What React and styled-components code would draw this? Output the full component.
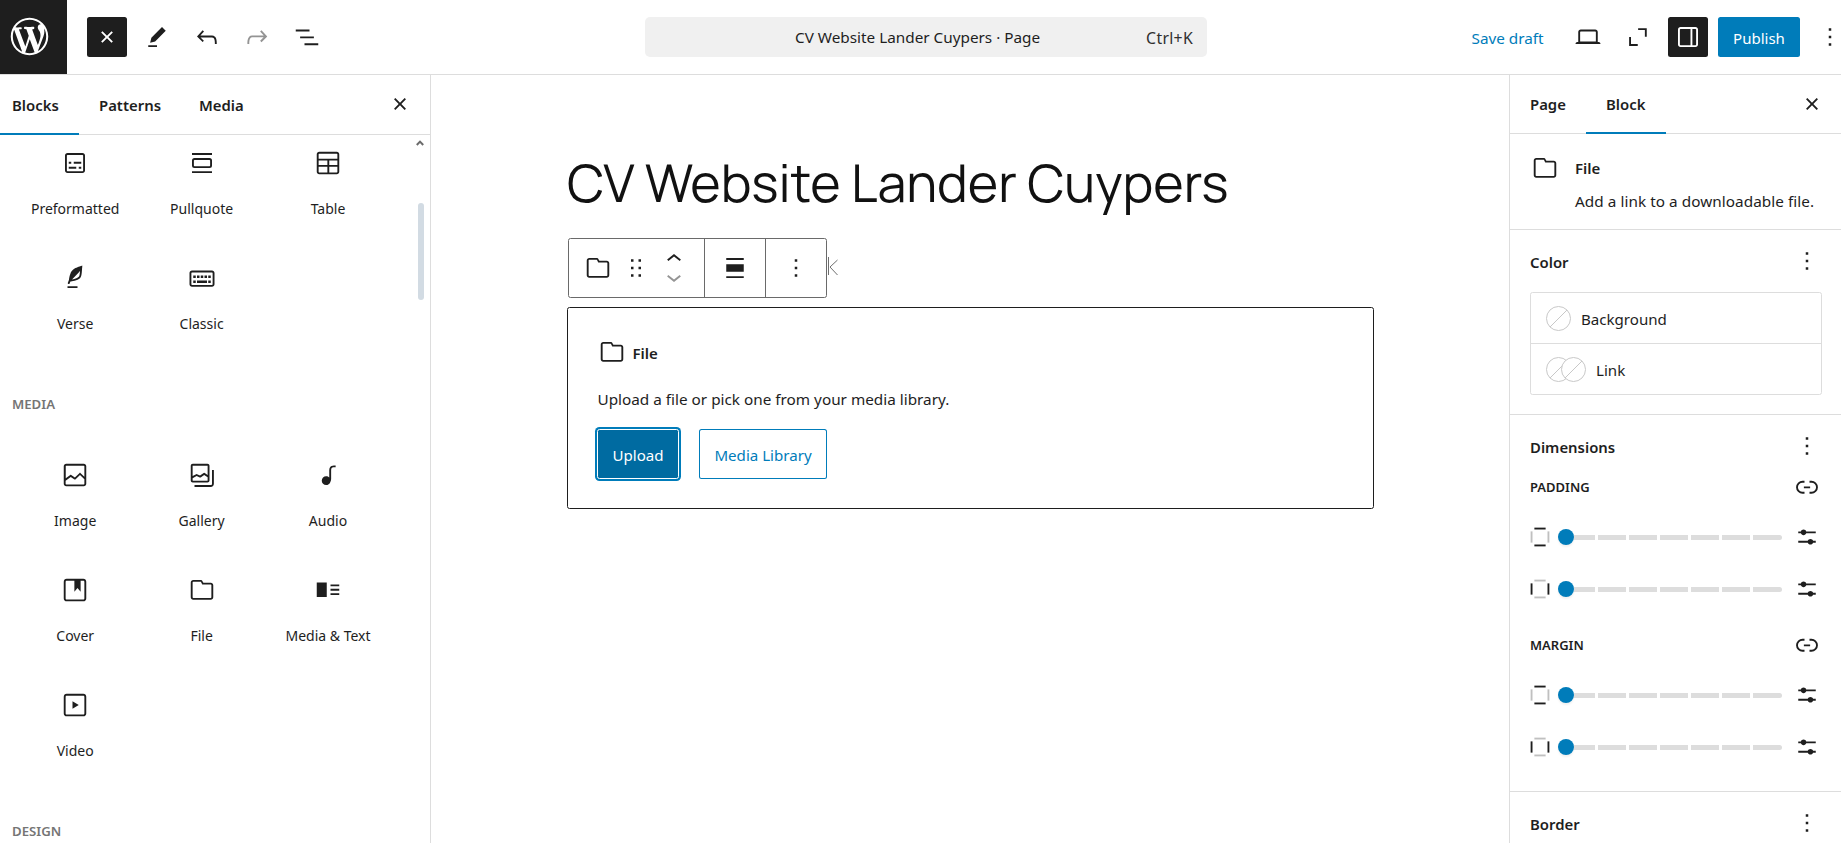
import React from "react";
import styled, { createGlobalStyle, css } from "styled-components";

const ink = "#1e1e1e";
const line = "#dddddd";
const blue = "#007cba";
const uiFont = `"Segoe UI", "Noto Sans", "Open Sans", sans-serif`;

const GlobalStyle = createGlobalStyle`
  *, *::before, *::after { box-sizing: border-box; }
  html, body { margin: 0; padding: 0; overflow: hidden; background: #fff; }
  button { font: inherit; letter-spacing: inherit; color: inherit; background: none; border: 0; padding: 0; margin: 0; }
  h1, h2, h3, p { margin: 0; }
`;

/* ---------- icons ---------- */

const Svg = styled.svg`
  display: block;
  flex: none;
  width: ${(p) => p.$size || 30}px;
  height: ${(p) => p.$size || 30}px;
  fill: currentColor;
`;

const paths = {
  plus: "M11 12.5V17.5H12.5V12.5H17.5V11H12.5V6H11V11H6V12.5H11Z",
  close: "M12 13.06l3.712 3.713 1.061-1.06L13.061 12l3.712-3.712-1.06-1.06L12 10.938 8.288 7.227l-1.061 1.06L10.939 12l-3.712 3.712 1.06 1.061L12 13.061z",
  edit: "m19 7-3-3-8.5 8.5-1 4 4-1L19 7Zm-7 11.5H5V20h7v-1.5Z",
  undo: "M18.3 11.7c-.6-.6-1.4-.9-2.3-.9H6.7l2.9-3.3-1.1-1-4.5 5L8.5 16l1-1-2.7-2.7H16c.5 0 .9.2 1.3.5 1 1 1 3.4 1 4.5v.3h1.5v-.2c0-1.5 0-4.3-1.5-5.7z",
  redo: "M15.6 6.5l-1.1 1 2.9 3.3H8c-.9 0-1.7.3-2.3.9-1.4 1.5-1.4 4.2-1.4 5.6v.2h1.5v-.3c0-1.1 0-3.5 1-4.5.3-.3.7-.5 1.3-.5h9.2L14.5 15l1.1 1.1 4.6-4.6-4.6-5z",
  listView: "M3 6h11v1.5H3V6Zm3.5 5.5h11V13h-11v-1.5ZM21 17H10v1.5h11V17Z",
  laptop: "M20.5 16h-.7V8c0-1.1-.9-2-2-2H6.2c-1.1 0-2 .9-2 2v8h-.7c-.8 0-1.5.7-1.5 1.5h20c0-.8-.7-1.5-1.5-1.5zM5.7 8c0-.3.2-.5.5-.5h11.6c.3 0 .5.2.5.5v7.6H5.7V8z",
  zoomOut: "M12.1 4.9h6.9v6.9h-1.5V6.4h-5.4V4.9ZM4.9 12h1.5v5.6h5.4v1.5H4.9V12Z",
  drawer: "M18 4H6c-1.1 0-2 .9-2 2v12c0 1.1.9 2 2 2h12c1.1 0 2-.9 2-2V6c0-1.1-.9-2-2-2zm-4 14.5H6c-.3 0-.5-.2-.5-.5V6c0-.3.2-.5.5-.5h8v13zm4.5-.5c0 .3-.2.5-.5.5h-2.5v-13H18c.3 0 .5.2.5.5v12z",
  more: "M13 19h-2v-2h2v2zm0-6h-2v-2h2v2zm0-6h-2V5h2v2z",
  file: "M19 6.2h-5.9l-.6-1.1c-.3-.7-1-1.1-1.8-1.1H5c-1.1 0-2 .9-2 2v11.8c0 1.1.9 2 2 2h14c1.1 0 2-.9 2-2V8.2c0-1.1-.9-2-2-2zm.5 11.6c0 .3-.2.5-.5.5H5c-.3 0-.5-.2-.5-.5V5.8c0-.3.2-.5.5-.5h5.8c.2 0 .4.1.4.3l1 2H19c.3 0 .5.2.5.5v9.7z",
  pullquote: "M18 8H6a2 2 0 00-2 2v4a2 2 0 002 2h12a2 2 0 002-2v-4a2 2 0 00-2-2zm.5 6a.5.5 0 01-.5.5H6a.5.5 0 01-.5-.5v-4a.5.5 0 01.5-.5h12a.5.5 0 01.5.5v4zM4 4h16v1.5H4V4zm0 16h16v-1.5H4V20z",
  preformatted: "M18 4H6c-1.1 0-2 .9-2 2v12c0 1.1.9 2 2 2h12c1.1 0 2-.9 2-2V6c0-1.1-.9-2-2-2zm.5 14c0 .3-.2.5-.5.5H6c-.3 0-.5-.2-.5-.5V6c0-.3.2-.5.5-.5h12c.3 0 .5.2.5.5v12zM7 16.5h6V15H7v1.5zm4-4h6V11h-6v1.5zM9 11H7v1.5h2V11zm6 5.5h2V15h-2v1.5z",
  table: "M19 3H5c-1.1 0-2 .9-2 2v14c0 1.1.9 2 2 2h14c1.1 0 2-.9 2-2V5c0-1.1-.9-2-2-2zM5 4.5h14c.3 0 .5.2.5.5v3.5h-15V5c0-.3.2-.5.5-.5zm8 5.5h6.5v3.5H13V10zm-1.5 3.5h-7V10h7v3.5zm-7 5.5v-4h7v4.5H5c-.3 0-.5-.2-.5-.5zm14.5.5h-6V15h6.5v4c0 .3-.2.5-.5.5z",
  verse: "M17.8 2l-.9.3c-.1 0-3.6 1-5.2 2.1C10 5.5 9.3 6.5 8.9 7.1c-.6.9-1.7 4.7-1.7 6.3l-.9 2.3c-.2.4 0 .8.4 1 .1 0 .2.1.3.1.3 0 .6-.2.7-.5l.6-1.5c.3 0 .7-.1 1.2-.2.7-.1 1.4-.3 2.2-.5.8-.2 1.6-.5 2.4-.8.7-.3 1.4-.7 1.9-1.2s.8-1.2 1-1.9c.2-.7.3-1.6.4-2.4.1-.8.1-1.7.2-2.5 0-.8.1-1.5.2-2.1V2zm-1.9 5.6c-.1.8-.2 1.5-.3 2.1-.2.6-.4 1-.6 1.3-.3.3-.8.6-1.4.9-.7.3-1.4.5-2.2.8-.6.2-1.3.3-1.8.4L15 7.5c.3-.3.6-.7 1-1.1 0 .4 0 .8-.1 1.2zM6 20h8v-1.5H6V20z",
  classic: "M20 6H4c-1.1 0-2 .9-2 2v9c0 1.1.9 2 2 2h16c1.1 0 2-.9 2-2V8c0-1.1-.9-2-2-2zm.5 11c0 .3-.2.5-.5.5H4c-.3 0-.5-.2-.5-.5V8c0-.3.2-.5.5-.5h16c.3 0 .5.2.5.5v9zM10 10H8v2h2v-2zm-5 2h2v-2H5v2zm8-2h-2v2h2v-2zm-5 6h8v-2H8v2zm6-4h2v-2h-2v2zm3 0h2v-2h-2v2zm0 4h2v-2h-2v2zM5 16h2v-2H5v2z",
  image: "M19 3H5c-1.1 0-2 .9-2 2v14c0 1.1.9 2 2 2h14c1.1 0 2-.9 2-2V5c0-1.1-.9-2-2-2zM5 4.5h14c.3 0 .5.2.5.5v8.4l-3-2.9c-.3-.3-.8-.3-1 0L11.9 14 9 12c-.3-.2-.6-.2-.8 0l-3.6 2.6V5c-.1-.3.1-.5.4-.5zm14 15H5c-.3 0-.5-.2-.5-.5v-2.4l4.1-3 3 1.9c.3.2.7.2.9-.1L16 12l3.5 3.4V19c0 .3-.2.5-.5.5z",
  gallery: "M16.375 4.5H4.625a.125.125 0 0 0-.125.125v8.254l2.859-1.54a.75.75 0 0 1 .68-.016l2.384 1.142 2.89-2.074a.75.75 0 0 1 .874 0l2.313 1.66V4.625a.125.125 0 0 0-.125-.125Zm.125 9.398-2.75-1.975-2.813 2.02a.75.75 0 0 1-.76.067l-2.444-1.17L4.5 14.583v1.792c0 .069.056.125.125.125h11.75a.125.125 0 0 0 .125-.125v-2.477ZM4.625 3C3.728 3 3 3.728 3 4.625v11.75C3 17.273 3.728 18 4.625 18h11.75c.898 0 1.625-.727 1.625-1.625V4.625C18 3.728 17.273 3 16.375 3H4.625ZM20 8v11c0 .69-.31 1-.999 1H6v1.5h13.001c1.52 0 2.499-.982 2.499-2.5V8H20Z",
  audio: "M17.7 4.3c-1.2 0-2.8 0-3.8 1-.6.6-.9 1.5-.9 2.6V14c-.6-.6-1.5-1-2.5-1C8.6 13 7 14.6 7 16.5S8.6 20 10.5 20c1.5 0 2.8-1 3.3-2.3.5-.8.7-1.8.7-2.5V7.9c0-.7.2-1.2.5-1.6.6-.6 1.8-.6 2.8-.6h.3V4.3h-.4z",
  cover: "M18.7 3H5.3C4 3 3 4 3 5.3v13.4C3 20 4 21 5.3 21h13.4c1.3 0 2.3-1 2.3-2.3V5.3C21 4 20 3 18.7 3zm.8 15.7c0 .4-.4.8-.8.8H5.3c-.4 0-.8-.4-.8-.8V5.3c0-.4.4-.8.8-.8h6.2v8.9l2.5-3.1 2.5 3.1V4.5h2.2c.4 0 .8.4.8.8v13.4z",
  mediaText: "M3 6v11.5h8V6H3Zm11 3h7V7.5h-7V9Zm7 3.5h-7V11h7v1.5ZM14 16h7v-1.5h-7V16Z",
  video: "M18.7 3H5.3C4 3 3 4 3 5.3v13.4C3 20 4 21 5.3 21h13.4c1.3 0 2.3-1 2.3-2.3V5.3C21 4 20 3 18.7 3zm.8 15.7c0 .4-.4.8-.8.8H5.3c-.4 0-.8-.4-.8-.8V5.3c0-.4.4-.8.8-.8h13.4c.4 0 .8.4.8.8v13.4zM10 15l5-3-5-3v6z",
  link: "M10 17.389H8.444A5.194 5.194 0 1 1 8.444 7H10v1.5H8.444a3.694 3.694 0 0 0 0 7.389H10v1.5ZM14 7h1.556a5.194 5.194 0 0 1 0 10.39H14v-1.5h1.556a3.694 3.694 0 0 0 0-7.39H14V7Zm-4.5 6h5v-1.5h-5V13Z",
  settings: "m19 7.5h-7.628c-.3089-.87389-1.1423-1.5-2.122-1.5-.97966 0-1.81309.62611-2.12197 1.5h-2.12803v1.5h2.12803c.30888.87389 1.14231 1.5 2.12197 1.5.9797 0 1.8131-.62611 2.122-1.5h7.628zM19 15h-2.128c-.3089-.8739-1.1423-1.5-2.122-1.5s-1.8131.6261-2.122 1.5h-7.628v1.5h7.628c.3089.8739 1.1423 1.5 2.122 1.5s1.8131-.6261 2.122-1.5h2.128z",
  up: "M6.5 12.4L12 8l5.5 4.4-.9 1.2L12 10l-4.5 3.6-1-1.2z",
  down: "M17.5 11.6L12 16l-5.5-4.4.9-1.2L12 14l4.5-3.6 1 1.2z",
  drag: "M8 7h2V5H8v2zm0 6h2v-2H8v2zm0 6h2v-2H8v2zm6-14v2h2V5h-2zm0 8h2v-2h-2v2zm0 6h2v-2h-2v2z",
  align: "M19 5.5H5V4h14v1.5ZM19 20H5v-1.5h14V20ZM5 9h14v6H5V9Z",
};

const Icon = ({ name, size }) => (
  <Svg viewBox="0 0 24 24" $size={size} aria-hidden="true">
    <path fillRule="evenodd" clipRule="evenodd" d={paths[name]} />
  </Svg>
);

const CrossIcon = styled(Svg)`
  transform: rotate(45deg);
`;

const sideBars = {
  top: "M7.5 6h9V4.5h-9z",
  bottom: "M7.5 19.5h9V18h-9z",
  left: "M4.5 16.5H6v-9H4.5z",
  right: "M18 7.5v9h1.5v-9z",
};

const SidesIcon = ({ axis }) => {
  const active = axis === "vertical" ? ["top", "bottom"] : ["left", "right"];
  return (
    <Svg viewBox="0 0 24 24" aria-hidden="true">
      {Object.entries(sideBars).map(([side, d]) => (
        <path key={side} d={d} opacity={active.includes(side) ? 1 : 0.28} />
      ))}
    </Svg>
  );
};

/* ---------- top bar ---------- */

const Editor = styled.div`
  display: grid;
  grid-template-rows: 75px 768px;
  width: 1841px;
  height: 843px;
  overflow: hidden;
  background: #fff;
  color: ${ink};
  font: 400 15.3px/20px ${uiFont};
`;

const Header = styled.header`
  display: flex;
  align-items: stretch;
  border-bottom: 1px solid ${line};
  overflow: hidden;
`;

const SiteHub = styled.a`
  display: flex;
  flex: none;
  align-items: center;
  width: 67px;
  padding-left: 7px;
  padding-bottom: 1px;
  background: ${ink};
  color: #fff;
`;

const Tools = styled.div`
  display: flex;
  flex: none;
  align-items: center;
  gap: 10px;
  width: 578px;
  padding-left: 20px;
`;

const ToolButton = styled.button`
  display: flex;
  flex: none;
  align-items: center;
  justify-content: center;
  width: 40px;
  height: 40px;
  border-radius: 2.5px;
  ${(p) => p.$pressed && css`background: ${ink}; color: #fff;`}
  ${(p) => p.$disabled && css`color: #949494;`}
`;

const DocumentBar = styled.div`
  display: flex;
  flex: none;
  align-items: center;
  justify-content: space-between;
  align-self: center;
  width: 562px;
  height: 40px;
  padding: 0 14px 0 150px;
  border-radius: 5px;
  background: #f0f0f0;
`;

const DocumentTitle = styled.span`
  white-space: pre;
`;

const Shortcut = styled.span`
  padding-top: 2px;
  font-size: 15.8px;
  letter-spacing: 0.3px;
  color: #2f2f2f;
`;

const Actions = styled.div`
  display: flex;
  flex: none;
  align-items: center;
  gap: 10px;
  margin-left: 264.5px;
`;

const SaveDraft = styled.button`
  width: 86.5px;
  padding-top: 2px;
  text-align: left;
  font-size: 15.3px;
  color: ${blue};
`;

const Publish = styled.button`
  width: 82px;
  height: 40px;
  padding-top: 2px;
  border-radius: 2.5px;
  background: ${blue};
  color: #fff;
  font-size: 15px;
`;

/* ---------- shared tabs ---------- */

const Body = styled.div`
  display: grid;
  grid-template-columns: 431px 1078px 332px;
  min-height: 0;
`;

const TabBar = styled.div`
  display: flex;
  flex: none;
  align-items: stretch;
  height: ${(p) => p.$height}px;
  border-bottom: 1px solid ${line};
`;

const Tab = styled.button`
  flex: none;
  width: ${(p) => p.$width}px;
  margin-bottom: -1px;
  padding-top: 1px;
  padding-left: ${(p) => p.$inset ?? 20}px;
  text-align: left;
  font-weight: 600;
  font-size: 14.9px;
  border-bottom: 2px solid ${(p) => (p.$active ? blue : "transparent")};
`;

const TabClose = styled.div`
  display: flex;
  flex: 1;
  align-items: flex-start;
  justify-content: flex-end;
  padding-top: 14px;
  padding-right: ${(p) => p.$gap}px;
`;

/* ---------- inserter ---------- */

const Inserter = styled.aside`
  display: flex;
  flex-direction: column;
  border-right: 1px solid ${line};
  min-height: 0;
`;

const InserterBody = styled.div`
  display: flex;
  flex: 1;
  min-height: 0;
  overflow: hidden;
`;

const BlockList = styled.div`
  width: 410px;
  padding-left: 12px;
`;

const BlockGrid = styled.div`
  display: grid;
  grid-template-columns: repeat(3, 126.4px);
  grid-auto-rows: 115px;
`;

const BlockItem = styled.button`
  display: flex;
  flex-direction: column;
  align-items: center;
  gap: 21px;
  padding-top: 13px;
  font-size: 14px;
`;

const GroupTitle = styled.h2`
  height: 82px;
  padding-top: 29px;
  font-size: 13.2px;
  font-weight: 600;
  text-transform: uppercase;
  color: #757575;
`;

const ScrollRail = styled.div`
  display: flex;
  flex-direction: column;
  align-items: center;
  width: 20px;
  padding-top: 5px;
`;

const ScrollArrow = styled.svg`
  display: block;
  width: 8px;
  height: 6px;
  margin-bottom: 57px;
`;

const ScrollThumb = styled.div`
  width: 6px;
  height: 97px;
  margin-left: 2px;
  border-radius: 3px;
  background: #d2dbe3;
`;

/* ---------- canvas ---------- */

const Canvas = styled.main`
  padding: 79px 135px 0 136px;
`;

const PageTitle = styled.h1`
  height: 84px;
  font: 400 52px/58px "Manrope", "Inter", sans-serif;
  letter-spacing: -0.04px;
  color: #111;
  white-space: nowrap;
`;

const ToolbarRow = styled.div`
  display: flex;
  align-items: center;
  height: 60px;
`;

const BlockToolbar = styled.div`
  display: flex;
  width: 259px;
  height: 60px;
  margin-left: 0.5px;
  border: 1px solid #6a6a6a;
  border-radius: 2.5px;
`;

const ToolbarGroup = styled.div`
  display: flex;
  flex: none;
  align-items: center;
  justify-content: ${(p) => (p.$single ? "center" : "flex-start")};
  width: ${(p) => p.$width}px;
  padding-left: ${(p) => (p.$single ? 0 : 14.5)}px;
  & + & { border-left: 1px solid #6a6a6a; }
`;

const DragHandle = styled.div`
  margin-left: 8px;
`;

const Movers = styled.div`
  display: flex;
  flex-direction: column;
  margin-left: 11px;
`;

const Mover = styled.div`
  display: flex;
  align-items: center;
  justify-content: center;
  width: 23px;
  height: 18.5px;
  color: ${(p) => (p.$disabled ? "#949494" : ink)};
`;

const Collapse = styled.svg`
  display: block;
  width: 12px;
  height: 20px;
  margin-left: 0.5px;
  margin-bottom: 4px;
  fill: none;
  stroke: #6f6f6f;
`;

const Placeholder = styled.section`
  width: 807px;
  height: 202px;
  margin-top: 9px;
  padding: 29px 30px;
  border: 1px solid ${ink};
  border-radius: 2.5px;
`;

const PlaceholderLabel = styled.h2`
  display: flex;
  align-items: center;
  gap: 5.5px;
  height: 30px;
  margin-left: -1px;
  font-size: 15px;
  font-weight: 600;
  line-height: 20px;
  span { padding-top: 1px; }
`;

const Instructions = styled.p`
  margin: 22px 0 20px -0.5px;
  line-height: 20px;
  white-space: nowrap;
`;

const ButtonRow = styled.div`
  display: flex;
  gap: 20px;
`;

const FileButton = styled.button`
  width: ${(p) => p.$width}px;
  height: 50px;
  padding-top: 1px;
  border-radius: 2.5px;
  font-size: 15.1px;
  ${(p) =>
    p.$primary
      ? css`
          margin-left: -1px;
          background: #006ba1;
          color: #fff;
          border: 1px solid #fff;
          box-shadow: 0 0 0 2px ${blue};
        `
      : css`
          color: ${blue};
          box-shadow: inset 0 0 0 1px ${blue};
        `}
`;

/* ---------- settings sidebar ---------- */

const Sidebar = styled.aside`
  display: flex;
  flex-direction: column;
  border-left: 1px solid ${line};
`;

const BlockCard = styled.div`
  display: flex;
  flex: none;
  gap: 15px;
  height: 96px;
  padding: 19px 0 0 20px;
  border-bottom: 1px solid ${line};
`;

const CardText = styled.div`
  padding-top: 5px;
  line-height: 20px;
  white-space: nowrap;
  h2 { font-size: 15px; font-weight: 600; line-height: 20px; }
  p { margin-top: 12.5px; letter-spacing: 0.05px; }
`;

const Panel = styled.section`
  flex: none;
  height: ${(p) => p.$height}px;
  padding: 11px 19px 0 20px;
  border-bottom: 1px solid ${line};
`;

const PanelHeader = styled.div`
  display: flex;
  align-items: center;
  justify-content: space-between;
  height: 40px;
  h2 { padding-top: 1px; font-size: 14.9px; font-weight: 600; line-height: 20px; }
`;

const ColorList = styled.div`
  height: 103px;
  margin-top: 11px;
  border: 1px solid ${line};
  border-radius: 2.5px;
`;

const ColorRow = styled.div`
  display: flex;
  align-items: center;
  height: 50px;
  padding-left: 15px;
  & + & { height: 51px; border-top: 1px solid ${line}; }
`;

const Swatches = styled.svg`
  display: block;
  height: 25px;
  margin-right: 10px;
  fill: #fff;
  stroke: #c8c8c8;
  stroke-width: 1;
`;

const ColorName = styled.span`
  padding-top: 2px;
  font-size: 15.1px;
`;

const SpacingList = styled.div`
  padding-top: 6px;
`;

const Spacing = styled.div`
  height: 158px;
`;

const SpacingHeader = styled.div`
  display: flex;
  align-items: center;
  justify-content: space-between;
  height: 30px;
  h3 { font-size: 13px; font-weight: 600; line-height: 20px; }
`;

const SliderGroup = styled.div`
  padding-top: 9px;
`;

const SliderRow = styled.div`
  display: flex;
  align-items: center;
  height: 52.3px;
`;

const SidesBox = styled.div`
  margin-left: -5px;
`;

const Slider = styled.div`
  display: flex;
  align-items: center;
  width: 223.5px;
  margin: 0 10px 0 3.3px;
`;

const Thumb = styled.div`
  flex: none;
  width: 16px;
  height: 16px;
  border-radius: 50%;
  background: ${blue};
  box-shadow: 0 2px 2px rgba(0, 0, 0, 0.06);
`;

const Track = styled.div`
  display: grid;
  flex: 1;
  grid-template-columns: 20.7px repeat(5, 28px) 1fr;
  gap: 3px;
  height: 5px;
`;

const TrackPart = styled.span`
  background: ${line};
  &:last-child { border-radius: 0 3px 3px 0; }
`;

/* ---------- data ---------- */

const textBlocks = [
  ["preformatted", "Preformatted"],
  ["pullquote", "Pullquote"],
  ["table", "Table"],
  ["verse", "Verse"],
  ["classic", "Classic"],
];

const mediaBlocks = [
  ["image", "Image"],
  ["gallery", "Gallery"],
  ["audio", "Audio"],
  ["cover", "Cover"],
  ["file", "File"],
  ["mediaText", "Media & Text"],
  ["video", "Video"],
];

const Blocks = ({ items }) => (
  <BlockGrid>
    {items.map(([icon, label]) => (
      <BlockItem key={label}>
        <Icon name={icon} />
        <span>{label}</span>
      </BlockItem>
    ))}
  </BlockGrid>
);

const SpacingControl = ({ title }) => (
  <Spacing>
    <SpacingHeader>
      <h3>{title}</h3>
      <Icon name="link" />
    </SpacingHeader>
    <SliderGroup>
      {["vertical", "horizontal"].map((axis) => (
        <SliderRow key={axis}>
          <SidesBox>
            <SidesIcon axis={axis} />
          </SidesBox>
          <Slider>
            <Thumb />
            <Track>
              {Array.from({ length: 7 }, (_, i) => (
                <TrackPart key={i} />
              ))}
            </Track>
          </Slider>
          <Icon name="settings" />
        </SliderRow>
      ))}
    </SliderGroup>
  </Spacing>
);

export default function App() {
  return (
    <Editor>
      <GlobalStyle />
      <Header>
        <SiteHub>
          <Svg $size={45} viewBox="-2 -2 24 24" aria-label="WordPress">
            <path d="M20 10c0-5.51-4.49-10-10-10C4.48 0 0 4.49 0 10c0 5.52 4.48 10 10 10 5.51 0 10-4.48 10-10zM7.78 15.37L4.37 6.22c.55-.02 1.17-.08 1.17-.08.5-.06.44-1.13-.06-1.11 0 0-1.45.11-2.37.11-.18 0-.37 0-.58-.01C4.12 2.69 6.87 1.11 10 1.11c2.33 0 4.45.87 6.05 2.34-.68-.11-1.65.39-1.65 1.58 0 .74.45 1.36.9 2.1.35.61.55 1.36.55 2.46 0 1.49-1.4 5-1.4 5l-3.03-8.37c.54-.02.82-.17.82-.17.5-.05.44-1.25-.06-1.22 0 0-1.44.12-2.38.12-.87 0-2.33-.12-2.33-.12-.5-.03-.56 1.2-.06 1.22l.92.08 1.26 3.41zM17.41 10c.24-.64.74-1.87.43-4.25.7 1.29 1.05 2.71 1.05 4.25 0 3.29-1.73 6.24-4.4 7.78.97-2.59 1.94-5.2 2.92-7.78zM6.1 18.09C3.12 16.65 1.11 13.53 1.11 10c0-1.3.23-2.48.72-3.59C3.25 10.3 4.67 14.2 6.1 18.09zm4.03-6.63l2.58 6.98c-.86.29-1.76.45-2.71.45-.79 0-1.57-.11-2.29-.33.81-2.38 1.62-4.74 2.42-7.1z" />
          </Svg>
        </SiteHub>
        <Tools>
          <ToolButton $pressed>
            <CrossIcon viewBox="0 0 23.5 23.5" aria-hidden="true">
              <path d={paths.plus} />
            </CrossIcon>
          </ToolButton>
          <ToolButton><Icon name="edit" /></ToolButton>
          <ToolButton><Icon name="undo" /></ToolButton>
          <ToolButton $disabled><Icon name="redo" /></ToolButton>
          <ToolButton><Icon name="listView" /></ToolButton>
        </Tools>
        <DocumentBar>
          <DocumentTitle>CV Website Lander Cuypers · Page</DocumentTitle>
          <Shortcut>Ctrl+K</Shortcut>
        </DocumentBar>
        <Actions>
          <SaveDraft>Save draft</SaveDraft>
          <ToolButton><Icon name="laptop" /></ToolButton>
          <ToolButton><Icon name="zoomOut" /></ToolButton>
          <ToolButton $pressed><Icon name="drawer" /></ToolButton>
          <Publish>Publish</Publish>
          <ToolButton><Icon name="more" /></ToolButton>
        </Actions>
      </Header>

      <Body>
        <Inserter>
          <TabBar $height={60}>
            <Tab $active $width={79} $inset={12}>Blocks</Tab>
            <Tab $width={100}>Patterns</Tab>
            <Tab $width={86}>Media</Tab>
            <TabClose $gap={15}><Icon name="close" /></TabClose>
          </TabBar>
          <InserterBody>
            <BlockList>
              <Blocks items={textBlocks} />
              <GroupTitle>Media</GroupTitle>
              <Blocks items={mediaBlocks} />
              <GroupTitle>Design</GroupTitle>
            </BlockList>
            <ScrollRail>
              <ScrollArrow viewBox="0 0 8 6">
                <path d="M0.8 5 4 1.6 7.2 5" fill="none" stroke="#6b6b6b" strokeWidth="2" />
              </ScrollArrow>
              <ScrollThumb />
            </ScrollRail>
          </InserterBody>
        </Inserter>

        <Canvas>
          <PageTitle>CV Website Lander Cuypers</PageTitle>
          <ToolbarRow>
            <BlockToolbar>
              <ToolbarGroup $width={135}>
                <Icon name="file" />
                <DragHandle><Icon name="drag" /></DragHandle>
                <Movers>
                  <Mover><Icon name="up" /></Mover>
                  <Mover $disabled><Icon name="down" /></Mover>
                </Movers>
              </ToolbarGroup>
              <ToolbarGroup $single $width={61}><Icon name="align" /></ToolbarGroup>
              <ToolbarGroup $single $width={61}><Icon name="more" /></ToolbarGroup>
            </BlockToolbar>
            <Collapse viewBox="0 0 12 20">
              <path d="M1.5 1v18M10.5 4 3 11l7.5 8" />
            </Collapse>
          </ToolbarRow>
          <Placeholder>
            <PlaceholderLabel>
              <Icon name="file" />
              <span>File</span>
            </PlaceholderLabel>
            <Instructions>Upload a file or pick one from your media library.</Instructions>
            <ButtonRow>
              <FileButton $primary $width={82}>Upload</FileButton>
              <FileButton $width={128}>Media Library</FileButton>
            </ButtonRow>
          </Placeholder>
        </Canvas>

        <Sidebar>
          <TabBar $height={59}>
            <Tab $width={76}>Page</Tab>
            <Tab $active $width={80}>Block</Tab>
            <TabClose $gap={14}><Icon name="close" /></TabClose>
          </TabBar>
          <BlockCard>
            <Icon name="file" />
            <CardText>
              <h2>File</h2>
              <p>Add a link to a downloadable file.</p>
            </CardText>
          </BlockCard>
          <Panel $height={185}>
            <PanelHeader>
              <h2>Color</h2>
              <Icon name="more" />
            </PanelHeader>
            <ColorList>
              <ColorRow>
                <Swatches width="25" viewBox="0 0 25 25">
                  <circle cx="12.5" cy="12.5" r="12" />
                  <path d="M4 21 21 4" />
                </Swatches>
                <ColorName>Background</ColorName>
              </ColorRow>
              <ColorRow>
                <Swatches width="40" viewBox="0 0 40 25">
                  <circle cx="12.5" cy="12.5" r="12" />
                  <path d="M4 21 21 4" />
                  <circle cx="27.5" cy="12.5" r="12" />
                  <path d="M19 21 36 4" />
                </Swatches>
                <ColorName>Link</ColorName>
              </ColorRow>
            </ColorList>
          </Panel>
          <Panel $height={377}>
            <PanelHeader>
              <h2>Dimensions</h2>
              <Icon name="more" />
            </PanelHeader>
            <SpacingList>
              <SpacingControl title="PADDING" />
              <SpacingControl title="MARGIN" />
            </SpacingList>
          </Panel>
          <Panel $height={80}>
            <PanelHeader>
              <h2>Border</h2>
              <Icon name="more" />
            </PanelHeader>
          </Panel>
        </Sidebar>
      </Body>
    </Editor>
  );
}
